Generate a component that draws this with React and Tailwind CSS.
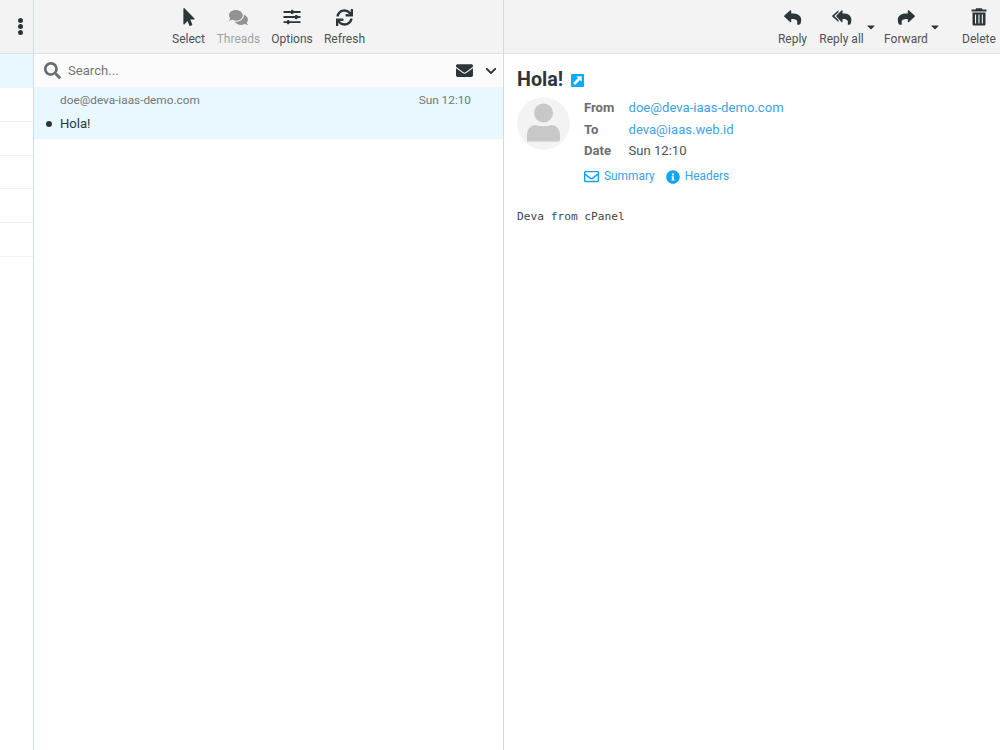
import {
  FaCaretDown,
  FaChevronDown,
  FaComments,
  FaEnvelope,
  FaInfoCircle,
  FaMousePointer,
  FaRegEnvelope,
  FaSearch,
  FaSync,
} from "react-icons/fa";

function OptionsIcon() {
  return (
    <svg width="18" height="16" viewBox="0 0 18 16" fill="#2c363a">
      <path d="M.5 2h17v1.900H.5zM.5 7.100h17V9H.5zM.5 12.200h17v1.900H.5z" />
      <rect x="8" y="0.8" width="2.400" height="4.300" rx="0.7" />
      <rect x="12" y="5.900" width="2.400" height="4.300" rx="0.7" />
      <rect x="4" y="11" width="2.400" height="4.300" rx="0.7" />
    </svg>
  );
}

const arrow =
  "M.4 5.500 6 .6c.6-.5 1.200-.2 1.200.5v2.500c6.200-.1 10 1.800 10 6.300 0 1.600-.3 3-.9 4.100-.3.600-.8.700-1.400.7h-1.200c-.5 0-.8-.3-.6-.8.9-3.500-.6-5-5.900-4.900v2.400c0 .7-.6 1-1.200.5L.4 6.800a.9.9 0 0 1 0-1.300z";

function ReplyIcon() {
  return (
    <svg width="18" height="15" viewBox="0 0 18 15" fill="#2c363a">
      <path d={arrow} />
    </svg>
  );
}

function ForwardIcon() {
  return (
    <svg width="18" height="15" viewBox="0 0 18 15" fill="#2c363a" className="-scale-x-100">
      <path d={arrow} />
    </svg>
  );
}

function ReplyAllIcon() {
  return (
    <svg width="20" height="15" viewBox="0 0 20 15" fill="#2c363a">
      <path d="M6.500 .3v1.900L2.300 6.100l4.200 3.900v1.900L.4 6.700a.8.8 0 0 1 0-1.200z" />
      <path d={arrow} transform="translate(4.200 0) scale(.88 1)" />
    </svg>
  );
}

function TrashIcon() {
  return (
    <svg width="16" height="18" viewBox="0 0 16 18" fill="#2c363a">
      <path d="M5.2.3h5.6l.7 1.200h4v1.900H.5V1.500h4z" />
      <path
        fillRule="evenodd"
        d="M1.500 4.500h13v11.800c0 .8-.5 1.300-1.300 1.300H2.800c-.8 0-1.300-.5-1.300-1.300zM4 6.400v9.200h1.100V6.400zm3.400 0v9.200h1.100V6.400zm3.400 0v9.200h1.100V6.400z"
      />
    </svg>
  );
}

function OpenIcon() {
  return (
    <svg width="13" height="13" viewBox="0 0 13 13">
      <rect width="13" height="13" rx="1" fill="#00acff" />
      <path d="M5.300 2.300h5.400v5.400L9 6 4 11 2.100 9.100 7 4z" fill="#fff" />
    </svg>
  );
}

function ToolButton({ icon, label, className = "" }) {
  return (
    <button className={`flex shrink-0 flex-col items-center pt-2 text-[12px] ${className}`}>
      <span className="flex h-[18px] items-center text-[#2c363a]">{icon}</span>
      <span className="mt-1 leading-[18px] whitespace-nowrap">{label}</span>
    </button>
  );
}

function Folders() {
  return (
    <aside className="flex w-[34px] shrink-0 flex-col border-r border-[#d4dbde]">
      <div className="flex h-[54px] shrink-0 flex-col items-center gap-[1.5px] border-b border-[#dfe2e3] bg-[#f3f3f3] pt-[18px] pl-2">
        <i className="size-[4.6px] rounded-full bg-[#2c363a]" />
        <i className="size-[4.6px] rounded-full bg-[#2c363a]" />
        <i className="size-[4.6px] rounded-full bg-[#2c363a]" />
      </div>
      <div className="h-[34px] bg-[#e9f8ff]" />
      {[1, 2, 3, 4, 5].map((n) => (
        <div key={n} className="h-[33.8px] border-b border-[#f0f2f3]" />
      ))}
    </aside>
  );
}

function MessageList() {
  return (
    <section className="flex w-[470px] shrink-0 flex-col border-r border-[#d4dbde]">
      <header className="flex h-[54px] shrink-0 border-b border-[#dfe2e3] bg-[#f3f3f3] pl-[129.5px]">
        <ToolButton className="w-[50px]" label="Select" icon={<FaMousePointer size={18} />} />
        <ToolButton className="w-[50px] opacity-50" label="Threads" icon={<FaComments size={19} />} />
        <ToolButton className="w-[57px]" label="Options" icon={<OptionsIcon />} />
        <ToolButton className="w-[48px]" label="Refresh" icon={<FaSync size={17} />} />
      </header>
      <div className="flex h-[33px] items-center bg-[#fbfbfb] pr-[6px] pl-[10px]">
        <FaSearch size={17} className="text-[#696c6e]" />
        <span className="ml-[7px] text-[13.1px] text-[#737677]">Search...</span>
        <FaEnvelope size={17} className="ml-auto text-[#2c363a]" />
        <FaChevronDown size={12} className="ml-[12px] text-[#2c363a]" />
      </div>
      <article className="h-[52px] bg-[#e9f8ff] pr-8 pl-[26px]">
        <div className="flex h-[27px] items-center justify-between text-[11.8px] text-[#737677]">
          <span>doe@deva-iaas-demo.com</span>
          <span>Sun 12:10</span>
        </div>
        <div className="-ml-[14px] flex h-[20px] items-center text-[13.1px] text-[#2c363a]">
          <i className="mr-2 size-[6px] rounded-full bg-[#2c363a]" />
          Hola!
        </div>
      </article>
    </section>
  );
}

function Avatar() {
  return (
    <svg width="53" height="53" viewBox="0 0 53 53" className="shrink-0">
      <circle cx="26.5" cy="26.5" r="26.3" fill="#f3f3f3" />
      <circle cx="26.5" cy="16" r="9.5" fill="#c8c8c8" />
      <path d="M10 44.500v-6.500c0-6 4-10 9-10 3 1.600 12 1.600 15 0 5 0 9 4 9 10v4.500c0 1.400-.8 2-2 2z" fill="#c8c8c8" />
    </svg>
  );
}

function MessageView() {
  return (
    <section className="min-w-0 flex-1 overflow-hidden">
      <header className="flex h-[54px] border-b border-[#dfe2e3] bg-[#f3f3f3] pl-[267px]">
        <ToolButton className="w-[43px]" label="Reply" icon={<ReplyIcon />} />
        <ToolButton className="w-[55px]" label="Reply all" icon={<ReplyAllIcon />} />
        <FaCaretDown size={12} className="mt-[21px] -ml-[4px] shrink-0 text-[#2c363a]" />
        <ToolButton className="ml-px w-[56px]" label="Forward" icon={<ForwardIcon />} />
        <FaCaretDown size={12} className="mt-[21px] -ml-[5px] shrink-0 text-[#2c363a]" />
        <ToolButton className="ml-[17px] w-[42px]" label="Delete" icon={<TrashIcon />} />
      </header>
      <div className="px-[13px] pt-[13px]">
        <h1 className="flex h-[26px] items-center gap-[8px] text-[19.7px] font-bold text-[#2c363a]">
          Hola!
          <OpenIcon />
        </h1>
        <div className="mt-[4px] flex">
          <Avatar />
          <div className="ml-[14px] text-[13.1px]">
            <dl className="grid grid-cols-[44.5px_auto] leading-[21.6px]">
              <dt className="font-bold text-[#6a6e70]">From</dt>
              <dd className="text-[#3aa2e6]">doe@deva-iaas-demo.com</dd>
              <dt className="font-bold text-[#6a6e70]">To</dt>
              <dd className="text-[#3aa2e6]">deva@iaas.web.id</dd>
              <dt className="font-bold text-[#6a6e70]">Date</dt>
              <dd>Sun 12:10</dd>
            </dl>
            <div className="mt-[6px] flex h-[18px] items-center text-[11.9px] text-[#3aa2e6]">
              <FaRegEnvelope size={15} className="mr-[5px] text-[#0ea5f5]" />
              Summary
              <FaInfoCircle size={14} className="mr-[5px] ml-[11px] text-[#0ea5f5]" />
              Headers
            </div>
          </div>
        </div>
        <pre className="mt-[22px] font-['DejaVu_Sans_Mono',monospace] text-[11.2px] leading-[17px] text-[#3c464a]">
          Deva from cPanel
        </pre>
      </div>
    </section>
  );
}

export default function App() {
  return (
    <main className="flex h-screen overflow-hidden bg-white font-[Roboto,sans-serif] text-[#4a5255]">
      <Folders />
      <MessageList />
      <MessageView />
    </main>
  );
}
